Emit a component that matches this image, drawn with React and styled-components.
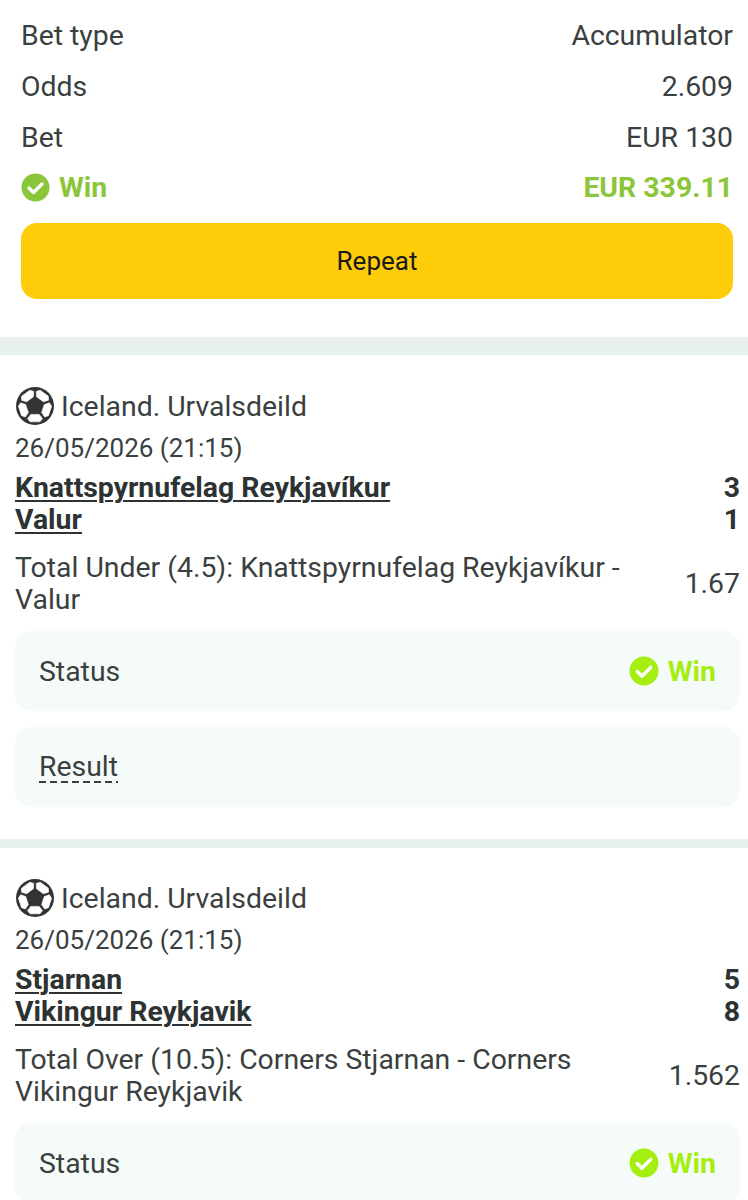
import React from "react";
import styled, { createGlobalStyle } from "styled-components";

const GlobalStyle = createGlobalStyle`
  html, body {
    margin: 0;
    padding: 0;
    background: #fff;
    overflow: hidden;
  }
  body {
    font-family: Roboto, "Liberation Sans", sans-serif;
    color: #3a3f3f;
  }
`;

const Page = styled.div`
  width: 748px;
  height: 1200px;
  overflow: hidden;
  background: #fff;
`;

const Summary = styled.section`
  padding: 10px 15px 38px 21px;
`;

const SummaryRow = styled.div`
  display: flex;
  justify-content: space-between;
  align-items: center;
  height: 51px;
  margin-top: ${(p) => (p.$win ? "-1px" : "0")};
  font-size: 28.4px;
  font-weight: ${(p) => (p.$win ? 700 : 400)};
  color: ${(p) => (p.$win ? "#8bc53a" : "#3a3f3f")};
`;

const WinLabel = styled.span`
  display: flex;
  align-items: center;
  gap: 9px;
`;

const RepeatButton = styled.button`
  display: block;
  width: 100%;
  height: 76px;
  margin-top: 10px;
  border: none;
  border-radius: 16px;
  background: #fecc08;
  color: #1a1a1a;
  font-family: inherit;
  font-size: 26px;
`;

const Divider = styled.div`
  height: ${(p) => p.$height}px;
  background: #e9f1ef;
`;

const Event = styled.section`
  padding: ${(p) => p.$top}px 8px 32px 15px;
`;

const League = styled.div`
  display: flex;
  align-items: center;
  gap: 6px;
  height: 40px;
  font-size: 28.4px;
`;

const DateLine = styled.div`
  font-size: 26px;
  line-height: 32px;
  margin-top: 6px;
`;

const Teams = styled.div`
  margin-top: 8px;
`;

const TeamRow = styled.div`
  display: flex;
  justify-content: space-between;
  font-size: 28.4px;
  font-weight: 700;
  line-height: 32px;
  color: #2d3232;
`;

const TeamName = styled.span`
  text-decoration: underline;
  text-decoration-thickness: 2px;
  text-underline-offset: 3px;
`;

const Pick = styled.div`
  display: flex;
  justify-content: space-between;
  align-items: center;
  gap: 30px;
  margin-top: 16px;
  font-size: 28.4px;
  line-height: 32px;
`;

const PickText = styled.div`
  max-width: 620px;
`;

const InfoBox = styled.div`
  display: flex;
  justify-content: space-between;
  align-items: center;
  height: 80px;
  margin-top: ${(p) => p.$gap}px;
  padding: 0 24px;
  border-radius: 16px;
  background: #f5fbf9;
  font-size: 28.4px;
`;

const StatusWin = styled.span`
  display: flex;
  align-items: center;
  gap: 9px;
  font-weight: 700;
  color: #a5ee12;
`;

const DashedLabel = styled.span`
  margin-top: 2px;
  padding-bottom: 2px;
  line-height: 28px;
  background: repeating-linear-gradient(90deg, #3a3f3f 0 7px, transparent 7px 11px) bottom / 100% 2px no-repeat;
`;

const CheckIcon = ({ color, size = 29 }) => (
  <svg width={size} height={size} viewBox="0 0 29 29">
    <circle cx="14.5" cy="14.5" r="14" fill={color} />
    <path
      d="M8 15l4.500 4.500L21 11"
      fill="none"
      stroke="#fff"
      strokeWidth="3.4"
      strokeLinecap="round"
      strokeLinejoin="round"
    />
  </svg>
);

const patchAngles = [36, 108, 180, 252, 324];

const BallIcon = () => (
  <svg width="40" height="40" viewBox="0 0 40 40">
    <circle cx="20" cy="20" r="19" fill="#333" />
    {patchAngles.map((angle) => (
      <path
        key={angle}
        d="M15.800 11.600H24.200L27.500 7.400 25 4.200H15L12.500 7.400z"
        fill="#fff"
        stroke="#fff"
        strokeWidth="0.6"
        strokeLinejoin="round"
        transform={`rotate(${angle} 20 20)`}
      />
    ))}
    <path d="M20 11.500l8.100 5.900-3.100 9.500H15l-3.100-9.500z" fill="#333" />
  </svg>
);

const EventCard = ({ top, teams, pick, odds, showResult }) => (
  <Event $top={top}>
    <League>
      <BallIcon />
      Iceland. Urvalsdeild
    </League>
    <DateLine>26/05/2026 (21:15)</DateLine>
    <Teams>
      {teams.map((team) => (
        <TeamRow key={team.name}>
          <TeamName>{team.name}</TeamName>
          <span>{team.score}</span>
        </TeamRow>
      ))}
    </Teams>
    <Pick>
      <PickText>{pick}</PickText>
      <span>{odds}</span>
    </Pick>
    <InfoBox $gap={15}>
      <span>Status</span>
      <StatusWin>
        <CheckIcon color="#a5ee12" size={30} />
        Win
      </StatusWin>
    </InfoBox>
    {showResult && (
      <InfoBox $gap={16}>
        <DashedLabel>Result</DashedLabel>
      </InfoBox>
    )}
  </Event>
);

export default function App() {
  return (
    <Page>
      <GlobalStyle />
      <Summary>
        <SummaryRow>
          <span>Bet type</span>
          <span>Accumulator</span>
        </SummaryRow>
        <SummaryRow>
          <span>Odds</span>
          <span>2.609</span>
        </SummaryRow>
        <SummaryRow>
          <span>Bet</span>
          <span>EUR 130</span>
        </SummaryRow>
        <SummaryRow $win>
          <WinLabel>
            <CheckIcon color="#8bc53a" />
            Win
          </WinLabel>
          <span>EUR 339.11</span>
        </SummaryRow>
        <RepeatButton>Repeat</RepeatButton>
      </Summary>
      <Divider $height={18} />
      <EventCard
        top={31}
        teams={[
          { name: "Knattspyrnufelag Reykjavíkur", score: 3 },
          { name: "Valur", score: 1 },
        ]}
        pick="Total Under (4.5): Knattspyrnufelag Reykjavíkur - Valur"
        odds="1.67"
        showResult
      />
      <Divider $height={9} />
      <EventCard
        top={30}
        teams={[
          { name: "Stjarnan", score: 5 },
          { name: "Vikingur Reykjavik", score: 8 },
        ]}
        pick="Total Over (10.5): Corners Stjarnan - Corners Vikingur Reykjavik"
        odds="1.562"
      />
    </Page>
  );
}
